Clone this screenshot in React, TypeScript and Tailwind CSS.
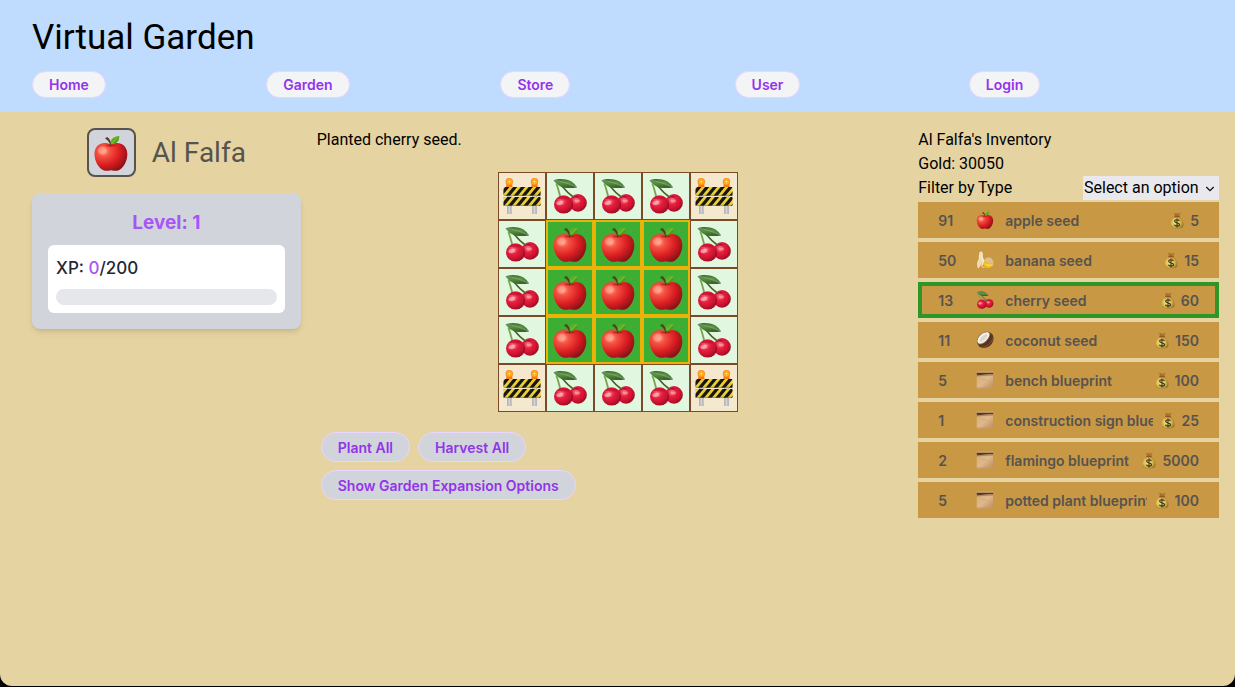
import React from "react";

type IconProps = { className?: string };

function Gradients() {
  return (
    <svg width="0" height="0" className="absolute" aria-hidden="true">
      <defs>
        <radialGradient id="apple" cx="0.28" cy="0.3" r="0.8">
          <stop offset="0" stopColor="#ff9d86" />
          <stop offset="0.25" stopColor="#f4503f" />
          <stop offset="0.6" stopColor="#dc1f22" />
          <stop offset="1" stopColor="#8a0f14" />
        </radialGradient>
        <radialGradient id="cherry" cx="0.38" cy="0.35" r="0.7">
          <stop offset="0" stopColor="#ff8094" />
          <stop offset="0.35" stopColor="#e8203f" />
          <stop offset="0.75" stopColor="#c8102f" />
          <stop offset="1" stopColor="#8f0a22" />
        </radialGradient>
        <linearGradient id="leaf" x1="0" y1="0" x2="1" y2="1">
          <stop offset="0" stopColor="#7cc52c" />
          <stop offset="1" stopColor="#2f8f10" />
        </linearGradient>
        <linearGradient id="cherryLeaf" x1="0" y1="0" x2="0.2" y2="1">
          <stop offset="0" stopColor="#3a6a2d" />
          <stop offset="0.5" stopColor="#5c8e47" />
          <stop offset="1" stopColor="#386529" />
        </linearGradient>
        <radialGradient id="lamp">
          <stop offset="0" stopColor="#fff3a0" />
          <stop offset="0.45" stopColor="#ffc02c" />
          <stop offset="1" stopColor="#ff8208" />
        </radialGradient>
        <linearGradient id="leg">
          <stop offset="0" stopColor="#aaaaaf" />
          <stop offset="0.5" stopColor="#d4d4d8" />
          <stop offset="1" stopColor="#a6a6ac" />
        </linearGradient>
        <linearGradient id="paper" x1="0" y1="0" x2="1" y2="1">
          <stop offset="0" stopColor="#d5ac7c" />
          <stop offset="0.5" stopColor="#dfba8c" />
          <stop offset="1" stopColor="#bb8a5b" />
        </linearGradient>
        <radialGradient id="bag" cx="0.42" cy="0.5" r="0.6">
          <stop offset="0" stopColor="#fbe886" />
          <stop offset="0.55" stopColor="#dfbd4e" />
          <stop offset="1" stopColor="#96722a" />
        </radialGradient>
      </defs>
    </svg>
  );
}

function Apple({ className }: IconProps) {
  return (
    <svg viewBox="0 0 36 36" className={className} aria-hidden="true">
      <path
        d="M18 9.6C21 7.8 25 7.3 28.5 9c4.2 2 6 6.3 5.8 11-.3 6-3.300 11.600-7 14.300-2.700 1.900-5.400 1.700-9.300.9-3.900.8-6.600 1-9.300-.9C5 31.600 1.900 26 1.500 20 1.200 15.300 3 11 7.200 9c3.600-1.700 7.800-1.200 10.800.6z"
        fill="url(#apple)"
      />
      <path d="M12.500 10c2.200 2.300 8.800 2.300 11.200 0-1.800-.8-3.800-.9-5.700.1-1.800-1-3.800-.9-5.500-.1z" fill="#a81716" opacity="0.7" />
      <ellipse cx="9.500" cy="15.500" rx="4.500" ry="4" fill="#ffc0ac" opacity="0.4" />
      <path d="M12 3.300l2.300-1.200c2.300 1.800 4 4.700 4.300 8.100l-1.500.2c-.6-3.200-2.400-5.400-5.100-7.100z" fill="#5b3822" />
      <path d="M17.600 8.800c-.4-5 2.900-7.300 8.600-7.900.3 5.200-2.700 8.300-8.600 7.900z" fill="url(#leaf)" />
      <path d="M18.500 8c2.500-1.500 4.600-3.300 6.300-5.500" stroke="#a7d957" strokeWidth="0.6" fill="none" />
    </svg>
  );
}

function Cherry({ className }: IconProps) {
  return (
    <svg viewBox="0 0 36 36" className={className} aria-hidden="true">
      <circle cx="26" cy="24.900" r="8.800" fill="url(#cherry)" />
      <path d="M4.300 5.500c2 4.700 2.800 9 4.200 14.500" stroke="#7ba551" strokeWidth="1.900" fill="none" />
      <path d="M9.500 7.500c3.600 4.500 7.300 8.500 13 12.500" stroke="#4a6427" strokeWidth="1.700" fill="none" />
      <ellipse cx="11.600" cy="26.400" rx="9.600" ry="9.200" fill="url(#cherry)" />
      <path d="M5.500 19.800c3.500-2.200 8-1.800 11.200.5-2.500 1.800-8.300 1.800-11.200-.5z" fill="#b00f2c" opacity="0.55" />
      <path d="M22 18.400c1.500-.8 4-.7 5.500.3-1 1.200-4.300 1.400-5.500-.3z" fill="#8d0b23" opacity="0.7" />
      <ellipse cx="7.800" cy="25" rx="3.400" ry="2" fill="#ffc1c9" opacity="0.65" transform="rotate(-12 7.800 25)" />
      <ellipse cx="25.500" cy="23" rx="2.600" ry="1.500" fill="#ffb2be" opacity="0.55" />
      <path d="M1.500 2.300C6.500.2 14.500.7 18.800 3c3.200 1.700 4.600 4.200 6.300 6.400-5.500 1-13 1-17.500-1.500C4.700 6.300 3.200 4.300 1.500 2.300z" fill="url(#cherryLeaf)" />
      <path d="M2.500 2.700C9 3 17 5.300 24.300 9" stroke="#91b67c" strokeWidth="0.700" fill="none" />
    </svg>
  );
}

const STRIPES = [-13, -5.2, 2.6, 10.4, 18.2, 26, 33.8];

function Board({ y, shift, clip }: { y: number; shift: number; clip: string }) {
  return (
    <g>
      <clipPath id={clip}>
        <rect x="0.500" y={y} width="37" height="8.700" rx="0.700" />
      </clipPath>
      <g clipPath={`url(#${clip})`}>
        <rect x="0" y={y} width="38" height="9" fill="#ecd02c" />
        {STRIPES.map((x) => (
          <path key={x} d={`M${x + shift} ${y + 9}l7.500 -9h4.200l-7.500 9z`} fill="#17150f" />
        ))}
        <rect x="0" y={y + 7.9} width="38" height="1" fill="#615216" opacity="0.6" />
      </g>
    </g>
  );
}

function Barrier({ className, id }: IconProps & { id: string }) {
  return (
    <svg viewBox="0 0 38 38" className={className} aria-hidden="true">
      {[6.300, 31.500].map((x) => (
        <g key={x}>
          <rect x={x - 2.3} y="17" width="4.600" height="20" fill="url(#leg)" />
          <path d={`M${x - 2.6} 6h5.200l.7 4.500h-6.600z`} fill="#fb741b" />
          <circle cx={x} cy="4.700" r="3.700" fill="url(#lamp)" />
          <circle cx={x} cy="4.600" r="1.500" fill="none" stroke="#f19a10" strokeWidth="0.600" />
        </g>
      ))}
      <Board y={10} shift={0} clip={`${id}-upper`} />
      <Board y={20} shift={2} clip={`${id}-lower`} />
    </svg>
  );
}

function Banana({ className }: IconProps) {
  return (
    <svg viewBox="0 0 36 36" className={className} aria-hidden="true">
      <path d="M16 19C22 8 34 12 35 24c.2 4-1 6-3 7-6-3-10-8-16-12z" fill="#dfbd91" />
      <path d="M14 20c5-3 8 2 10 4 3 2 7 0 10 0 1 6-5 10-11 10-6 .2-9-4-9-14z" fill="#f2bc20" />
      <path d="M17 24c4 3 10 5 16 2-3 6-13 5-16-2z" fill="#ffe260" />
      <path d="M7 3C9-.5 13 .5 13.500 5c.3 5-.5 9 3.500 14l-4 10-6-7C4.500 16 6 8 7 3z" fill="#f9edc9" />
      <path d="M10 4c-1 7-1 12 2 19" stroke="#dbc391" strokeWidth="1.200" fill="none" />
      <path d="M7 15c-5 4-6 10-4 18 1 2.500 3 1.800 4-.5 2-5 5-7 7-13z" fill="#eddbb9" />
      <path d="M12 21c-2 5 1 10 6 13-6 0-10-4-9-9z" fill="#e7cb99" />
    </svg>
  );
}

function Coconut({ className }: IconProps) {
  return (
    <svg viewBox="0 0 36 36" className={className} aria-hidden="true">
      <path d="M4 17C6 8 17 1 27 3c8 2 10 11 6 20-4 8-14 13-23 10C4 31 2 25 4 17z" fill="#583520" />
      <path d="M10 32c10 1 20-6 24-19M15 33c8-2 15-8 18-16" stroke="#83583a" strokeWidth="1.200" fill="none" />
      <path d="M2 18C4 8 17-1 26 2c6 3 1 15-7 21C10 30 0 29 2 18z" fill="#76502f" />
      <path d="M3 18C5.500 8.500 17 .500 25 3c5 2.500 0 13-7 18.500C10.500 27.500 1 26.500 3 18z" fill="#f7f3e8" />
      <path d="M7.500 18C10 11 17 5.500 22 6.500c3 2-1 9-6 13-5 4-10 3.500-8.500-1.500z" fill="#dbd8cd" />
      <path d="M9 19c3 2 9-2 13-9-2 8-10 14-13 9z" fill="#eeebe2" />
    </svg>
  );
}

function Scroll({ className }: IconProps) {
  return (
    <svg viewBox="0 0 36 36" className={className} aria-hidden="true">
      <path d="M1.500 5h32.500v29c-11 .5-21 0-32.500 1z" fill="url(#paper)" />
      <path d="M1.500 7h32.500v2.500c-11-.5-22 0-32.500 1.500z" fill="#8a623c" opacity="0.5" />
      <rect x="0.500" y="1" width="35" height="3" rx="1" fill="#d3aa7b" />
      <path d="M1 3.500h34l-1 3C23 6.500 12 7.500 2 8.500z" fill="#5a3b22" />
      <path d="M1.500 32.500c10 1 22-.5 33-1v3c-11 .5-22 1-33 1z" fill="#c99b69" />
      <path d="M8 14c4 5 11 2 18 8" stroke="#cfa576" strokeWidth="1.500" fill="none" />
    </svg>
  );
}

function MoneyBag({ className }: IconProps) {
  return (
    <svg viewBox="0 0 28 34" className={className} aria-hidden="true">
      <path d="M7 2c3-2 4 1 7 0 3 1 5-2 8 0-1 3-3 4-4 7h-8C9 6 7 5 7 2z" fill="#b78c39" />
      <path d="M10 3l2 5M14 2v6M19 3l-2 5" stroke="#735121" strokeWidth="1" />
      <path d="M9.500 9h9c5 4 8.500 10 8.500 16 0 6-4 8-13 8S1 31 1 25C1 19 4.500 13 9.500 9z" fill="url(#bag)" />
      <rect x="8.500" y="7.500" width="11" height="2.800" rx="1.400" fill="#9c4f28" />
      <path
        d="M18.800 17.700c-1-1.700-2.700-2.200-4.800-2.200-2.700 0-4.700 1.100-4.700 3.200 0 4.500 9.700 1.800 9.700 6.400 0 2.100-2 3.300-4.900 3.300-2.500 0-4.500-.8-5.300-2.900M14 13v18"
        stroke="#33351f"
        strokeWidth="2.200"
        fill="none"
      />
    </svg>
  );
}

const NAV = ["Home", "Garden", "Store", "User", "Login"];

type Item = { count: number; name: string; price: number; Icon: React.FC<IconProps> };

const ITEMS: Item[] = [
  { count: 91, name: "apple seed", price: 5, Icon: Apple },
  { count: 50, name: "banana seed", price: 15, Icon: Banana },
  { count: 13, name: "cherry seed", price: 60, Icon: Cherry },
  { count: 11, name: "coconut seed", price: 150, Icon: Coconut },
  { count: 5, name: "bench blueprint", price: 100, Icon: Scroll },
  { count: 1, name: "construction sign blueprint", price: 25, Icon: Scroll },
  { count: 2, name: "flamingo blueprint", price: 5000, Icon: Scroll },
  { count: 5, name: "potted plant blueprint", price: 100, Icon: Scroll },
];

const PLOTS = ["bcccb", "caaac", "caaac", "caaac", "bcccb"];

function Plot({ kind, id }: { kind: string; id: string }) {
  const base = "flex size-12 items-center justify-center";
  if (kind === "a") {
    return (
      <button aria-label="Apple, ready to harvest" className={`${base} border-2 border-[#eab308] bg-[#3dae34]`}>
        <Apple className="size-9" />
      </button>
    );
  }
  if (kind === "c") {
    return (
      <button aria-label="Cherry" className={`${base} border border-[#7c4a25] bg-[#e2f7e0]`}>
        <Cherry className="size-9" />
      </button>
    );
  }
  return (
    <button aria-label="Construction sign" className={`${base} border border-[#7c4a25] bg-[#f4e8cf]`}>
      <Barrier id={id} className="size-[38px]" />
    </button>
  );
}

function Action({ children }: { children: React.ReactNode }) {
  return (
    <button className="rounded-full border border-[#e9d5ff] bg-[#d1d5db] px-4 pt-[5px] pb-[3px] font-['Inter','Liberation_Sans',sans-serif] text-sm font-semibold text-[#9333ea]">
      {children}
    </button>
  );
}

export default function App() {
  return (
    <div className="flex min-h-screen flex-col bg-black pb-px font-['Roboto','Liberation_Sans',sans-serif] text-base text-black">
      <Gradients />
      <div className="flex grow flex-col overflow-hidden rounded-b-xl bg-[#e5d3a1]">
        <header className="bg-[#bfdbfe] px-8 pt-[18px] pb-[14px]">
          <h1 className="text-[35px] leading-10">Virtual Garden</h1>
          <nav className="mt-[13px] grid grid-cols-5">
            {NAV.map((label) => (
              <div key={label} className="flex">
                <a
                  href={`#${label.toLowerCase()}`}
                  className="rounded-full border border-[#e9d5ff] bg-[#f3f4f6] px-4 py-1 font-['Inter','Liberation_Sans',sans-serif] text-sm leading-[17px] font-semibold text-[#9333ea]"
                >
                  {label}
                </a>
              </div>
            ))}
          </nav>
        </header>

        <main className="flex px-4 py-4">
          <section className="w-1/4 px-4">
            <div className="flex items-center justify-center gap-4">
              <div className="flex size-[49px] items-center justify-center rounded-lg border-2 border-[#57534e] bg-[#d1d5db]">
                <Apple className="size-9" />
              </div>
              <h2 className="text-[28px] leading-9 text-[#57534e]">Al Falfa</h2>
            </div>
            <div className="mt-4 rounded-lg bg-[#d1d5db] p-4 font-['Inter','Liberation_Sans',sans-serif] shadow-md">
              <p className="text-center text-[19px] leading-7 font-bold text-[#a855f7]">Level: 1</p>
              <div className="mt-2 rounded-md bg-white p-2">
                <p className="pt-0.5 text-[17px] leading-[26px] font-medium text-[#1f2937]">
                  XP: <span className="text-[#a855f7]">0</span>/200
                </p>
                <div
                  role="progressbar"
                  aria-label="Experience"
                  aria-valuenow={0}
                  aria-valuemax={200}
                  className="mt-2 h-4 rounded-full bg-[#e5e7eb]"
                />
              </div>
            </div>
          </section>

          <section className="w-1/2">
            <p>Planted cherry seed.</p>
            <div className="mt-5 flex flex-col items-center">
              {PLOTS.map((row, r) => (
                <div key={r} className="flex">
                  {row.split("").map((kind, c) => (
                    <Plot key={c} kind={kind} id={`barrier-${r}-${c}`} />
                  ))}
                </div>
              ))}
            </div>
            <div className="mt-5 flex flex-col gap-2 px-1">
              <div className="flex gap-2">
                <Action>Plant All</Action>
                <Action>Harvest All</Action>
              </div>
              <div className="flex">
                <Action>Show Garden Expansion Options</Action>
              </div>
            </div>
          </section>

          <section className="w-1/4">
            <h2>Al Falfa's Inventory</h2>
            <p>Gold: 30050</p>
            <div className="flex justify-between">
              <label htmlFor="type-filter">Filter by Type</label>
              <div className="relative">
                <select id="type-filter" className="block h-6 w-[136px] appearance-none bg-[#e9e9ed] pl-px">
                  <option>Select an option</option>
                </select>
                <svg viewBox="0 0 10 10" className="pointer-events-none absolute top-2 right-1 size-[10px]" aria-hidden="true">
                  <path d="M1.300 3l3.700 3.700L8.700 3" stroke="#111" strokeWidth="1.300" fill="none" />
                </svg>
              </div>
            </div>
            <ul className="mt-0.5 flex flex-col gap-1 font-['Inter','Liberation_Sans',sans-serif]">
              {ITEMS.map(({ count, name, price, Icon }) => (
                <li key={name}>
                  <button
                    className={`flex h-9 w-full items-center border-4 px-4 text-left text-sm font-semibold text-[#57534e] bg-[#c89845] ${
                      name === "cherry seed" ? "border-[#2d9627]" : "border-[#c89845]"
                    }`}
                  >
                    <span className="w-[38px] shrink-0 pt-0.5">{count}</span>
                    <Icon className="size-[18px] shrink-0" />
                    <span className="ml-[11px] min-w-0 grow overflow-hidden pt-0.5 whitespace-nowrap">{name}</span>
                    <MoneyBag className="ml-2 h-[17px] w-[14px] shrink-0" />
                    <span className="ml-1.5 shrink-0 pt-0.5">{price}</span>
                  </button>
                </li>
              ))}
            </ul>
          </section>
        </main>
      </div>
    </div>
  );
}
